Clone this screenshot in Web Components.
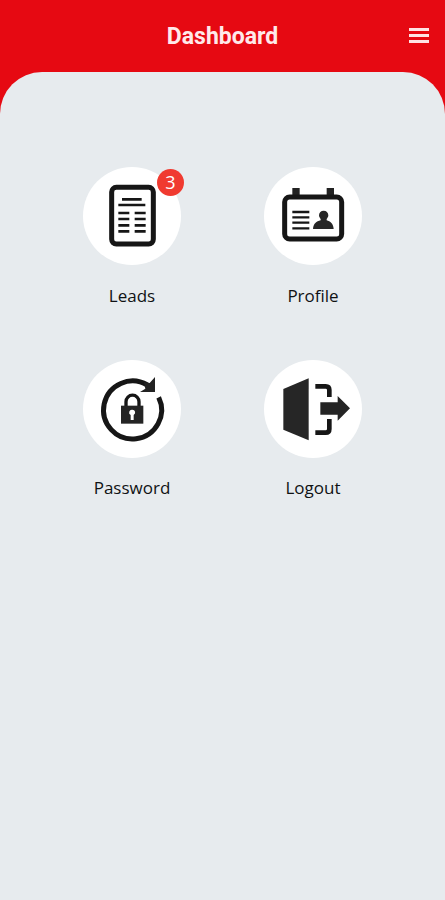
<!DOCTYPE html>
<html lang="en">
<head>
    <meta charset="utf-8">
    <title>Dashboard</title>
    <style>
        body {
            margin: 0;
            overflow: hidden;
            background: #e60912;
            font-family: "Open Sans", "Noto Sans", sans-serif;
        }
    </style>
</head>
<body>
    <dashboard-page>
        <app-header slot="header">Dashboard</app-header>
        <menu-tile label="Leads" badge="3">
            <svg viewBox="19 21 294 294">
                <rect x="105" y="82" width="125" height="170" rx="14" fill="none" stroke="#161616" stroke-width="15"/>
                <path d="M136 118H195M125 135H206M125 159H158M174 159H207M125 177H158M174 177H207M125 196H158M174 196H207M125 214H158M174 214H207" stroke="#161616" stroke-width="8"/>
            </svg>
        </menu-tile>
        <menu-tile label="Profile">
            <svg viewBox="21 21 294 294">
                <path d="M106 84H128V106H106ZM209 84H231V106H209Z" fill="#222"/>
                <rect x="83" y="111" width="171" height="126" rx="15" fill="none" stroke="#161616" stroke-width="15"/>
                <path d="M106 156H157M106 172H157M106 188H157M106 205H157" stroke="#161616" stroke-width="7"/>
                <path d="M200 152C208 152 214 158 214 166C214 171 211 174 209 177V181C220 184 229 191 230 207H168C169 191 178 184 191 181V177C189 174 186 171 186 166C186 158 192 152 200 152Z" fill="#262626"/>
            </svg>
        </menu-tile>
        <menu-tile label="Password">
            <svg viewBox="19 21 294 294">
                <path d="M246 133A87 87 0 1 1 212 96" fill="none" stroke="#161616" stroke-width="15"/>
                <path d="M235 72V117H190L206 107L202 88L219 90Z" fill="#222"/>
                <path d="M148 161V146A19.500 19.500 0 0 1 187 146V161" fill="none" stroke="#151515" stroke-width="10"/>
                <path d="M133 158H200V212H133Z" fill="#242424"/>
                <path d="M167 170A8.500 8.500 0 0 1 171 186V201H162V186A8.500 8.500 0 0 1 167 170Z" fill="#fff"/>
            </svg>
        </menu-tile>
        <menu-tile label="Logout">
            <svg viewBox="21 21 294 294">
                <path d="M79 108L155 76V262L79 230Z" fill="#262626"/>
                <path d="M175 100H206Q217 100 217 111V132M217 198V228Q217 239 206 239H175" fill="none" stroke="#161616" stroke-width="14"/>
                <path d="M190 148H242V129L279 166L242 203V185H190Z" fill="#242424"/>
            </svg>
        </menu-tile>
    </dashboard-page>

    <script>
        class DashboardPage extends HTMLElement {
            constructor() {
                super();
                this.attachShadow({mode: 'open'}).innerHTML = `
                    <style>
                        :host {
                            display: flex;
                            flex-direction: column;
                            height: 100vh;
                        }
                        main {
                            flex: 1;
                            box-sizing: border-box;
                            padding-top: 95px;
                            background: #e7ebee;
                            border-radius: 42px 42px 0 0;
                            display: grid;
                            grid-template-columns: 181px 181px;
                            grid-auto-rows: 192.6px;
                            justify-content: center;
                        }
                    </style>
                    <slot name="header"></slot>
                    <main><slot></slot></main>
                `;
            }
        }

        class AppHeader extends HTMLElement {
            constructor() {
                super();
                this.attachShadow({mode: 'open'}).innerHTML = `
                    <style>
                        :host {
                            display: grid;
                            grid-template-columns: 1fr auto 1fr;
                            align-items: center;
                            height: 72px;
                            box-sizing: border-box;
                            padding: 0 16px;
                            color: #ffe9ea;
                            font: bold 23px/28px Roboto, sans-serif;
                        }
                        h1 {
                            grid-column: 2;
                            margin: 0;
                            padding-top: 2px;
                            font: inherit;
                        }
                        svg {
                            justify-self: end;
                            width: 20px;
                            height: 15px;
                            margin-bottom: 1px;
                        }
                    </style>
                    <h1><slot></slot></h1>
                    <svg viewBox="0 0 20 15"><path d="M0 1.500H20M0 7.500H20M0 13.500H20" stroke="#ffe3e4" stroke-width="3"/></svg>
                `;
            }
        }

        class MenuTile extends HTMLElement {
            constructor() {
                super();
                this.attachShadow({mode: 'open'}).innerHTML = `
                    <style>
                        :host {
                            display: flex;
                            flex-direction: column;
                            align-items: center;
                            color: #101214;
                        }
                        .circle {
                            position: relative;
                            width: 98px;
                            height: 98px;
                            border-radius: 50%;
                            background: #fff;
                        }
                        ::slotted(svg) {
                            display: block;
                            width: 98px;
                            height: 98px;
                        }
                        .badge {
                            position: absolute;
                            top: 2px;
                            right: -3px;
                            width: 27px;
                            height: 27px;
                            border-radius: 50%;
                            background: #f03a30;
                            color: #fff;
                            font-size: 18px;
                            font-weight: 500;
                            line-height: 27px;
                            text-align: center;
                        }
                        .badge:empty {
                            display: none;
                        }
                        .label {
                            margin-top: 18.6px;
                            font-size: 17px;
                            font-weight: 500;
                            line-height: 24px;
                        }
                    </style>
                    <div class="circle"><slot></slot><span class="badge"></span></div>
                    <span class="label"></span>
                `;
            }

            connectedCallback() {
                this.shadowRoot.querySelector('.label').textContent = this.getAttribute('label');
                this.shadowRoot.querySelector('.badge').textContent = this.getAttribute('badge') || '';
            }
        }

        customElements.define('dashboard-page', DashboardPage);
        customElements.define('app-header', AppHeader);
        customElements.define('menu-tile', MenuTile);
    </script>
</body>
</html>
